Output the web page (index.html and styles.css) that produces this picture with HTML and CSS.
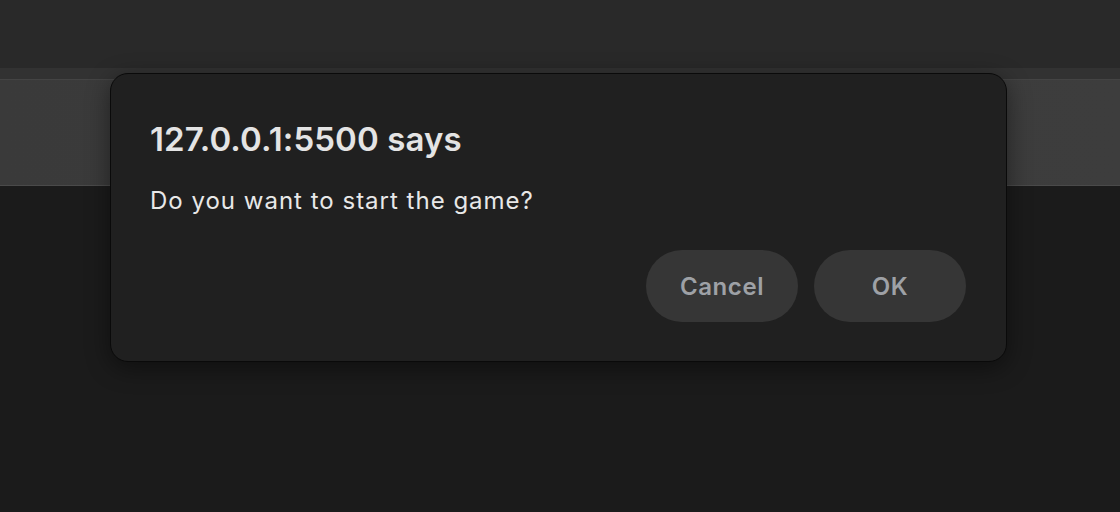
FILE: index.html
```html
<!DOCTYPE html>
<html>
<head>
<meta charset="utf-8">
<link rel="stylesheet" href="styles.css">
</head>
<body>
<div class="page">
  <div class="topbar"></div>
  <div class="band"></div>
  <div class="panel"></div>
  <div class="content"></div>
  <div class="dialog" role="alertdialog">
    <div class="title">127.0.0.1:5500 says</div>
    <div class="message">Do you want to start the game?</div>
    <div class="actions">
      <button class="btn">Cancel</button>
      <button class="btn">OK</button>
    </div>
  </div>
</div>
</body>
</html>
```
FILE: styles.css
```css
* { box-sizing: border-box; }
html, body { margin: 0; padding: 0; background: #1b1b1b; }
body { font-family: Inter, "Noto Sans", sans-serif; }
.page { position: relative; width: 1120px; height: 512px; display: flex; flex-direction: column; overflow: hidden; }
.topbar { height: 68px; background: #292929; }
.band { height: 12px; background: #323232; border-bottom: 1px solid #444; }
.panel { height: 106px; background: linear-gradient(90deg, #3a3a3a, #3d3d3d); border-bottom: 1px solid #4a4a4a; }
.content { flex: 1; background: #1b1b1b; }
.dialog {
  position: absolute; left: 110px; top: 73px; width: 897px; height: 289px;
  background: #202020; border: 1px solid #0a0a0a; border-radius: 18px;
  box-shadow: 0 6px 24px rgba(0,0,0,0.45);
  padding: 44px 40px 39px 39px;
  display: flex; flex-direction: column;
}
.title { color: #e4e4e4; font-size: 33px; font-weight: 600; line-height: 42px; letter-spacing: 0.1px; }
.message { color: #e8e8e8; font-size: 24px; font-weight: 400; line-height: 30px; margin-top: 26px; letter-spacing: 1px; }
.actions { margin-top: auto; display: flex; justify-content: flex-end; gap: 16px; }
.btn {
  width: 152px; height: 72px; border: none; border-radius: 36px;
  background: #363636; color: #9ea1a6; font-family: inherit;
  font-size: 24px; font-weight: 600; padding: 0; letter-spacing: 0.6px;
}
```
